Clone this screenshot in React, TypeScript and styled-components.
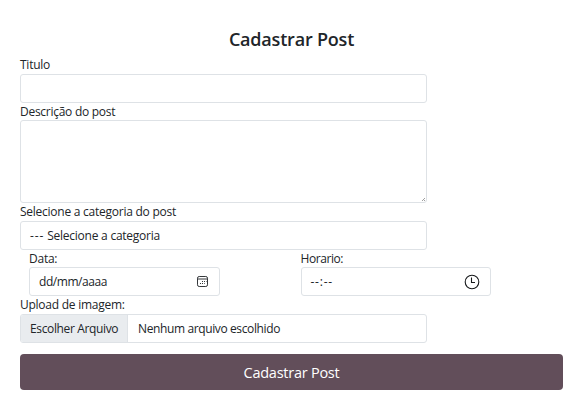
import React from "react";
import styled, { createGlobalStyle } from "styled-components";

const GlobalStyle = createGlobalStyle`
  *, *::before, *::after { box-sizing: border-box; }
  body {
    margin: 0;
    background: #fff;
    color: #212529;
    font-family: "Segoe UI", "Open Sans", "Noto Sans", sans-serif;
    font-size: 12px;
  }
`;

const Form = styled.form`
  width: 543px;
  margin-left: 20px;
  padding-top: 26px;
`;

const Title = styled.h1`
  margin: 0;
  height: 30px;
  line-height: 27px;
  font-size: 18px;
  font-weight: 600;
  text-align: center;
  letter-spacing: -0.2px;
`;

const Field = styled.div`
  width: 407px;
`;

const Label = styled.label<{ $height?: number; $spacing?: number }>`
  display: block;
  height: ${(p) => p.$height ?? 18}px;
  line-height: 18px;
  white-space: nowrap;
  letter-spacing: ${(p) => p.$spacing ?? -0.25}px;
`;

const Box = styled.div<{ $height?: number }>`
  display: flex;
  align-items: center;
  justify-content: space-between;
  height: ${(p) => p.$height ?? 29}px;
  border: 1px solid #dee2e6;
  border-radius: 3px;
  padding: 0 9px;
  background: #fff;
  overflow: hidden;
`;

const Area = styled(Box)`
  align-items: flex-end;
  justify-content: flex-end;
  padding: 0;
`;

const Value = styled.span<{ $spacing?: number }>`
  white-space: nowrap;
  line-height: 18px;
  letter-spacing: ${(p) => p.$spacing ?? -0.25}px;
`;

const Dashes = styled.span`
  letter-spacing: 0.9px;
`;

const Row = styled.div`
  display: flex;
  gap: 81px;
  padding-left: 9px;
`;

const Half = styled.div`
  width: 190.5px;
`;

const FileBox = styled(Box)`
  justify-content: flex-start;
  padding: 0;
`;

const FileButton = styled.span`
  display: flex;
  align-items: center;
  width: 107px;
  height: 100%;
  margin-right: 10px;
  padding-left: 9px;
  background: #e9ecef;
  border-right: 1px solid #dee2e6;
`;

const Submit = styled.button`
  display: block;
  width: 100%;
  height: 36px;
  margin-top: 11px;
  padding: 0;
  border: 0;
  border-radius: 4px;
  background: #624e5a;
  color: #fff;
  font-family: inherit;
  font-size: 14.5px;
  letter-spacing: -0.25px;
`;

const IconSlot = styled.span`
  display: flex;
  margin-right: 1px;
`;

const CalendarIcon = () => (
  <svg width="13" height="13" viewBox="0 0 13 13" fill="none" stroke="#34373a">
    <rect x="1.5" y="1.5" width="10" height="10" rx="1.7" />
    <path d="M1.5 4h10" />
    <path d="M6 6.5h1M8 6.5h1M10 6.5h.5M4 8.5h1M6 8.5h1M8 8.5h.7" />
  </svg>
);

const ClockIcon = () => (
  <svg width="16" height="16" viewBox="0 0 16 16" fill="none" stroke="#17191b" strokeWidth="1.1">
    <circle cx="8" cy="8" r="6.8" />
    <path d="M7.5 3.5v5h3.5" />
  </svg>
);

const Grip = () => (
  <svg width="4" height="4" viewBox="0 0 4 4" stroke="#777" strokeWidth=".7">
    <path d="M0 3L3 0M2 3L3 2" />
  </svg>
);

export default function App() {
  return (
    <>
      <GlobalStyle />
      <Form>
        <Title>Cadastrar Post</Title>
        <Field>
          <Label>Titulo</Label>
          <Box $height={29} />
          <Label $height={17} $spacing={-0.27}>
            Descrição do post
          </Label>
          <Area $height={83}>
            <Grip />
          </Area>
          <Label>Selecione a categoria do post</Label>
          <Box>
            <Value $spacing={-0.24}>
              <Dashes>---</Dashes> Selecione a categoria
            </Value>
          </Box>
        </Field>
        <Row>
          <Half>
            <Label $height={17}>Data:</Label>
            <Box>
              <Value $spacing={-0.45}>dd/mm/aaaa</Value>
              <IconSlot>
                <CalendarIcon />
              </IconSlot>
            </Box>
          </Half>
          <Half>
            <Label $height={17} $spacing={-0.42}>
              Horario:
            </Label>
            <Box>
              <Value $spacing={0.75}>--:--</Value>
              <IconSlot>
                <ClockIcon />
              </IconSlot>
            </Box>
          </Half>
        </Row>
        <Field>
          <Label>Upload de imagem:</Label>
          <FileBox>
            <FileButton>
              <Value $spacing={-0.36}>Escolher Arquivo</Value>
            </FileButton>
            <Value $spacing={-0.38}>Nenhum arquivo escolhido</Value>
          </FileBox>
        </Field>
        <Submit type="button">Cadastrar Post</Submit>
      </Form>
    </>
  );
}
